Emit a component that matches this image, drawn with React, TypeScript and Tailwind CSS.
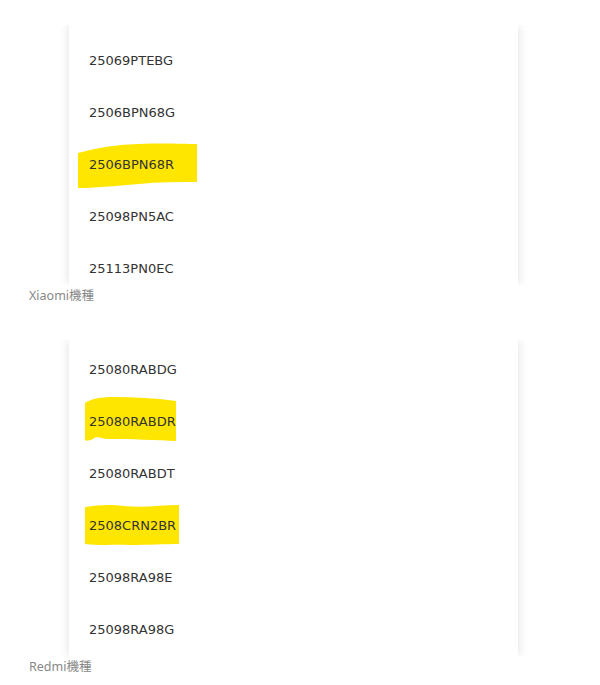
import React from 'react';

type Row = { code: string; mark?: string };

const xiaomi: Row[] = [
  { code: '25069PTEBG' },
  { code: '2506BPN68G' },
  { code: '2506BPN68R', mark: 'M9 15 C 25 11, 40 7, 70 6 C 95 5, 115 6, 128 6 L 128 44 C 110 44, 90 44, 70 46 C 45 48, 25 50, 9 50 Z' },
  { code: '25098PN5AC' },
  { code: '25113PN0EC' },
];

const redmi: Row[] = [
  { code: '25080RABDG' },
  { code: '25080RABDR', mark: 'M16 8 C 22 4, 30 2, 45 2 C 65 2, 85 3, 107 6 L 107 46 C 90 45, 60 44, 40 44 C 32 44, 28 40, 24 44 C 20 46, 17 46, 16 45 Z' },
  { code: '25080RABDT' },
  { code: '2508CRN2BR', mark: 'M16 8 C 30 6, 40 5, 55 7 C 75 9, 92 6, 110 6 L 110 45 C 95 45, 80 46, 60 46 C 45 45, 35 47, 16 45 Z' },
  { code: '25098RA98E' },
  { code: '25098RA98G' },
];

function ModelList({ rows, height, padTop }: { rows: Row[]; height: string; padTop: string }) {
  return (
    <div className="overflow-hidden -mx-4 px-4">
      <div className={`relative ml-[69px] w-[449px] bg-white shadow-[0_0_10px_rgba(0,0,0,0.13)] overflow-hidden ${height} ${padTop}`}>
        {rows.map((r) => (
          <div key={r.code} className="relative h-[52px] flex items-center pl-[20px]">
            {r.mark && (
              <svg className="absolute left-0 top-0" width="140" height="52" viewBox="0 0 140 52">
                <path d={r.mark} fill="#ffe600" />
              </svg>
            )}
            <span className="relative pt-[2px] text-[13px] text-[#333] font-['DejaVu_Sans',sans-serif]">
              {r.code}
            </span>
          </div>
        ))}
      </div>
    </div>
  );
}

export default function App() {
  return (
    <div className="w-[600px] h-[685px] bg-white pt-[25px] overflow-hidden">
      <ModelList rows={xiaomi} height="h-[260px]" padTop="pt-[9px]" />
      <div className="h-[22px] pl-[29px] leading-[22px] text-[12.5px] text-[#888] font-['Noto_Sans','Noto_Sans_CJK_JP',sans-serif]">
        Xiaomi機種
      </div>
      <div className="mt-[33px]">
        <ModelList rows={redmi} height="h-[316px]" padTop="pt-[3px]" />
      </div>
      <div className="h-[22px] pl-[29px] leading-[22px] text-[12.5px] text-[#888] font-['Noto_Sans','Noto_Sans_CJK_JP',sans-serif]">
        Redmi機種
      </div>
    </div>
  );
}
